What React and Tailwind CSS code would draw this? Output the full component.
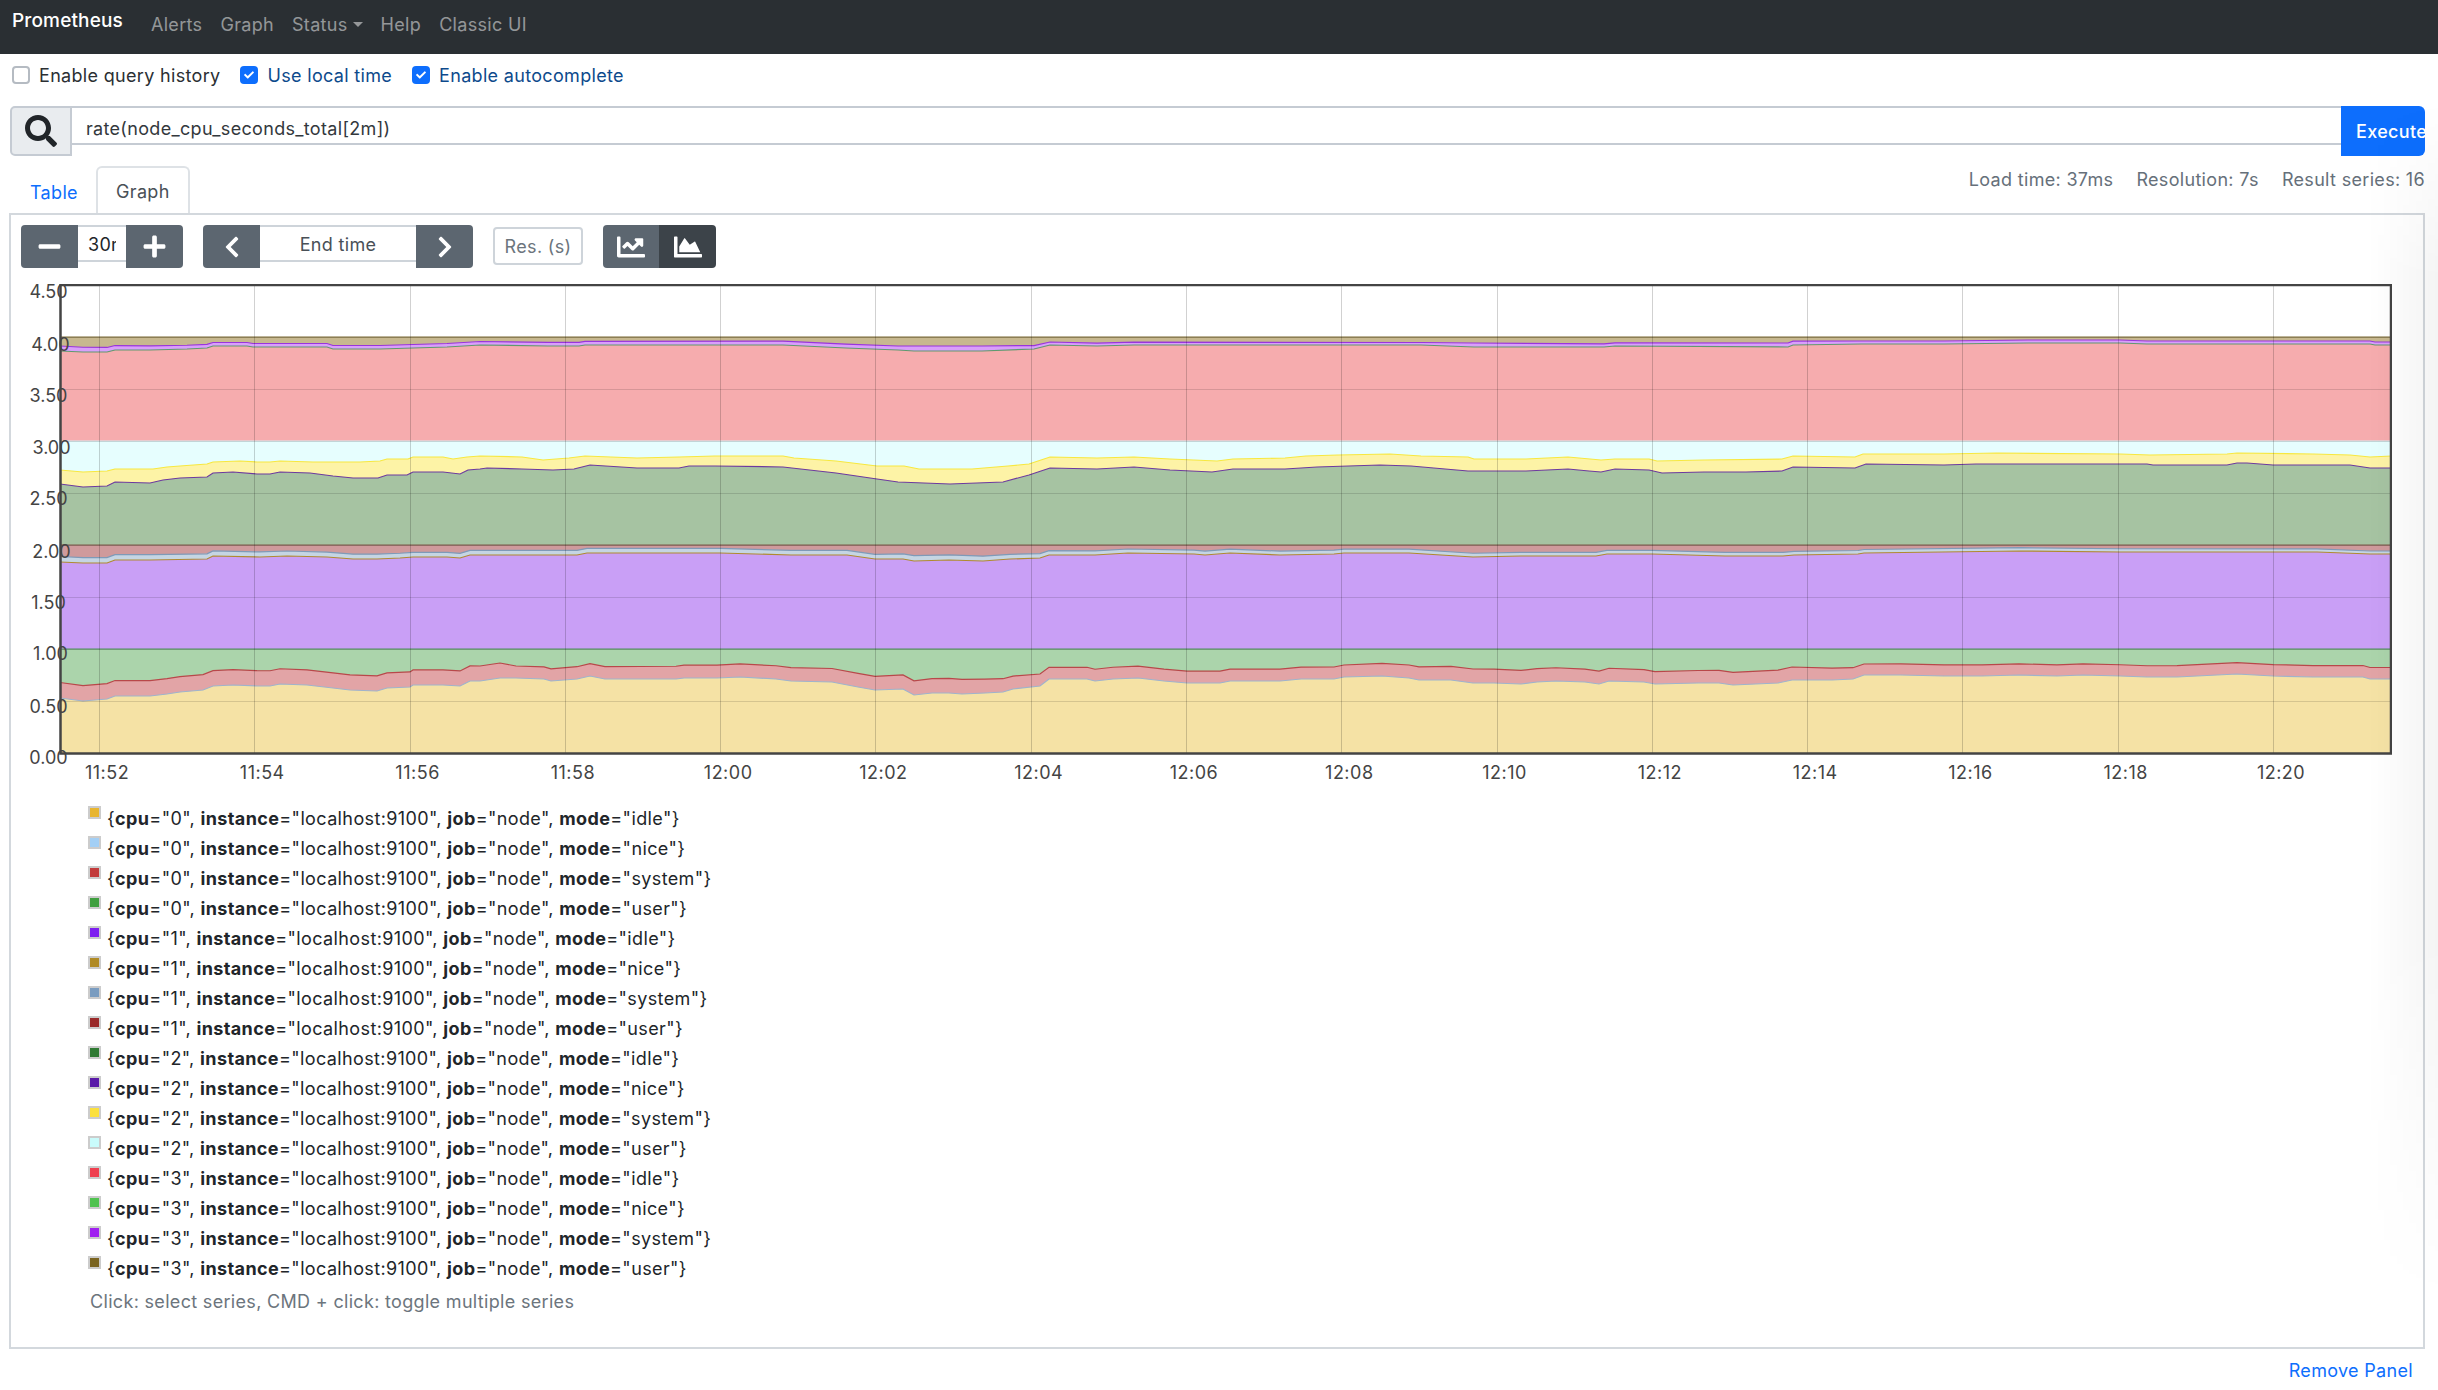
import React from 'react';
import { FaSearch, FaMinus, FaPlus, FaChevronLeft, FaChevronRight, FaChartLine, FaChartArea, FaCheck } from 'react-icons/fa';

const lerp = (table, x) => {
  for (let i = 1; i < table.length; i++) {
    if (x <= table[i][0]) {
      const [x0, y0] = table[i - 1];
      const [x1, y1] = table[i];
      return y0 + ((y1 - y0) * (x - x0)) / (x1 - x0);
    }
  }
  return table[table.length - 1][1];
};

const lift = (line, gaps) => line.map(([x, y]) => [x, y - lerp(gaps, x)]);
const flat = (y) => [[60, y], [2392, y]];

// series tops in page pixels
const idle0 = [[60,698],[83,701],[107,699],[115,696],[150,696],[167,694],[180,692],[203,690],[213,686],[233,685],[257,686],[270,686],[280,684],[307,685],[333,688],[350,690],[377,691],[387,688],[410,687],[413,685],[443,685],[460,686],[470,681],[480,681],[500,678],[516,678],[544,679],[551,681],[577,679],[590,676],[605,679],[676,679],[684,678],[717,678],[740,677],[776,679],[791,681],[832,682],[858,687],[875,690],[903,689],[914,695],[932,693],[949,693],[962,694],[985,693],[1003,692],[1013,689],[1040,686],[1049,679],[1087,679],[1095,681],[1113,679],[1138,678],[1164,681],[1187,683],[1220,683],[1230,681],[1280,681],[1301,679],[1334,679],[1344,677],[1382,676],[1409,678],[1419,680],[1451,680],[1473,683],[1494,683],[1521,684],[1537,682],[1556,681],[1585,682],[1599,684],[1609,681],[1644,682],[1655,684],[1698,683],[1719,683],[1733,685],[1778,683],[1792,680],[1832,680],[1853,679],[1864,675],[1901,675],[1944,676],[1982,676],[2019,675],[2057,676],[2083,675],[2120,676],[2147,677],[2177,677],[2237,674],[2273,676],[2313,677],[2363,677],[2370,679],[2392,679]];
const system0 = lift(idle0, [[60,15.5],[500,15],[516,12],[875,13.7],[962,14.7],[1049,11.7],[1344,12],[1473,14],[1655,12.3],[1792,13],[1864,11],[2392,11.5]]);
const idle1 = [[60,562],[83,563],[107,563],[115,560],[150,560],[207,559],[213,556],[260,557],[287,556],[327,557],[353,559],[377,559],[400,558],[413,557],[447,557],[460,558],[470,555],[577,555],[587,553],[720,553],[791,555],[847,555],[875,559],[903,559],[914,561],[949,560],[983,561],[1010,559],[1040,558],[1049,555],[1095,555],[1128,553],[1194,554],[1205,555],[1230,553],[1280,555],[1334,554],[1344,553],[1409,553],[1473,557],[1521,556],[1596,556],[1607,554],[1652,554],[1725,556],[1783,556],[1794,555],[1858,554],[1864,553],[2020,551],[2120,552],[2317,552],[2370,554],[2392,554]];
const system1 = lift(idle1, [[60,5.5],[500,4.5],[875,4.7],[914,5.3],[1100,4],[1864,3.5],[2392,3]]);
const idle2 = [[60,484],[83,487],[107,486],[115,482],[150,483],[163,480],[180,478],[207,477],[213,473],[233,472],[257,474],[270,474],[280,472],[310,473],[333,476],[353,478],[378,478],[387,475],[407,475],[413,472],[443,472],[460,474],[468,470],[480,469],[487,468],[522,469],[553,470],[574,469],[590,465],[637,468],[679,468],[689,466],[715,466],[783,467],[836,473],[877,479],[898,482],[950,484],[1003,482],[1029,475],[1050,468],[1097,469],[1134,467],[1170,470],[1212,472],[1233,469],[1285,469],[1317,467],[1380,465],[1411,466],[1468,471],[1526,471],[1568,469],[1589,471],[1601,472],[1615,469],[1649,470],[1662,473],[1704,472],[1746,472],[1782,471],[1793,467],[1855,468],[1866,464],[1944,465],[1976,464],[2147,464],[2153,465],[2227,465],[2237,463],[2247,463],[2273,465],[2350,465],[2370,468],[2392,468]];
const system2 = [[60,470],[83,472],[107,471],[115,469],[153,469],[167,467],[180,466],[207,464],[213,462],[240,461],[257,462],[270,462],[280,461],[313,462],[360,462],[380,461],[387,459],[408,459],[413,457],[443,457],[453,459],[467,457],[480,456],[522,457],[543,460],[569,458],[585,456],[637,458],[679,457],[715,456],[783,456],[794,458],[836,461],[877,466],[904,466],[919,469],[972,469],[1008,466],[1029,464],[1050,457],[1097,458],[1134,457],[1170,459],[1217,461],[1233,459],[1285,458],[1306,456],[1338,455],[1390,454],[1421,456],[1468,457],[1474,459],[1526,459],[1568,457],[1601,460],[1615,459],[1649,459],[1657,461],[1704,460],[1782,459],[1793,456],[1855,457],[1863,454],[1944,454],[1997,453],[2120,454],[2150,455],[2227,454],[2237,453],[2313,454],[2350,455],[2370,457],[2392,456]];
const idle3 = [[60,351],[83,352],[107,352],[115,350],[150,350],[187,349],[207,348],[213,346],[247,346],[253,347],[327,347],[333,349],[380,349],[413,348],[447,347],[480,345],[548,346],[579,346],[585,345],[783,345],[846,348],[898,350],[914,351],[982,351],[1034,349],[1050,345],[1097,346],[1134,345],[1421,345],[1474,347],[1604,347],[1615,346],[1788,347],[1793,345],[1861,344],[1944,344],[2028,343],[2120,343],[2147,344],[2370,344],[2375,345],[2392,345]];
const system3 = lift(idle3, [[60,5],[213,3.5],[480,3.5],[898,4],[914,5],[982,5],[1050,3],[1421,2.5],[1474,4],[1578,3],[1788,4],[1861,3],[2392,3]]);

// painted top of the stack first, each one runs down to the x axis
const bands = [
  { line: flat(337), fill: '#c7b88f', stroke: '#7d6a35' },
  { line: system3, fill: '#d99ffa', stroke: '#9a35dc' },
  { line: idle3, fill: '#f6acae', stroke: '#5f9a6f' },
  { line: flat(441), fill: '#e6fefe', stroke: '#d8ecef' },
  { line: system2, fill: '#fdf3a6', stroke: '#f7e840' },
  { line: idle2, fill: '#a6c3a2', stroke: '#6d3a9f' },
  { line: flat(545), fill: '#cf9a9c', stroke: '#7d5a48' },
  { line: system1, fill: '#c5d5e3', stroke: '#7f9ab8' },
  { line: idle1, fill: '#c99ff6', stroke: '#b08a30' },
  { line: flat(649), fill: '#abd4ab', stroke: '#4f8f5f' },
  { line: system0, fill: '#e2a4a6', stroke: '#b8484a' },
  { line: idle0, fill: '#f5e2a5', stroke: '#9fb3cc' },
];

const pts = (line) => line.map(([x, y]) => `${x},${y}`).join(' ');

const yTicks = [
  ['4.50', 48.5, 292], ['4.00', 50.5, 345], ['3.50', 48.5, 396], ['3.00', 51.5, 448], ['2.50', 48.5, 499],
  ['2.00', 51.5, 552], ['1.50', 48.5, 603], ['1.00', 50.5, 654], ['0.50', 48.5, 707], ['0.00', 48.5, 758],
];
const xTicks = ['11:52', '11:54', '11:56', '11:58', '12:00', '12:02', '12:04', '12:06', '12:08', '12:10', '12:12', '12:14', '12:16', '12:18', '12:20'];
const tickX = (i) => 99 + 155.29 * i;
const gridX = (i) => Math.round(tickX(i)) + 0.5;

const series = [
  ['0', 'idle', 'bg-[#e8b52f]'], ['0', 'nice', 'bg-[#a3cff5]'], ['0', 'system', 'bg-[#c23b3b]'], ['0', 'user', 'bg-[#3f9f3f]'],
  ['1', 'idle', 'bg-[#7e1ff0]'], ['1', 'nice', 'bg-[#b08a25]'], ['1', 'system', 'bg-[#7a9cc0]'], ['1', 'user', 'bg-[#9a2a2a]'],
  ['2', 'idle', 'bg-[#2f7a33]'], ['2', 'nice', 'bg-[#5a1aa8]'], ['2', 'system', 'bg-[#fbe03c]'], ['2', 'user', 'bg-[#c9fbfb]'],
  ['3', 'idle', 'bg-[#ef3f4f]'], ['3', 'nice', 'bg-[#4fc24f]'], ['3', 'system', 'bg-[#a020f0]'], ['3', 'user', 'bg-[#7a6420]'],
];

function Check({ on, label }) {
  return (
    <label className={`flex items-center gap-[9px] ${on ? 'text-[#0d4a8c]' : 'text-[#2b2f33]'}`}>
      {on ? (
        <span className="w-[18px] h-[18px] rounded-[4px] bg-[#0d6efd] flex items-center justify-center text-white">
          <FaCheck className="w-[10px] h-[10px]" />
        </span>
      ) : (
        <span className="w-[18px] h-[18px] rounded-[4px] border-2 border-[#b5bbc2] bg-white" />
      )}
      {label}
    </label>
  );
}

function Chart() {
  return (
    <div className="relative mt-[16px] h-[520px]">
      <svg viewBox="59 284 2333 471" className="ml-[48px] block w-[2333px] h-[471px]">
        {bands.map((b, i) => (
          <polygon key={i} points={`${pts(b.line)} 2392,754 60,754`} fill={b.fill} />
        ))}
        {bands.map((b, i) => (
          <polyline key={i} points={pts(b.line)} fill="none" stroke={b.stroke} strokeWidth="1.2" />
        ))}
        {[285, 337, 389, 441, 493, 545, 597, 649, 701].map((y) => (
          <line key={y} x1="60" x2="2392" y1={y + 0.5} y2={y + 0.5} stroke="rgba(0,0,0,0.13)" />
        ))}
        {xTicks.map((t, i) => (
          <line key={t} x1={gridX(i)} x2={gridX(i)} y1="285" y2="754" stroke="rgba(0,0,0,0.18)" />
        ))}
        <rect x="60.5" y="285" width="2330.5" height="468.5" fill="none" stroke="#444" strokeWidth="2.5" />
      </svg>
      {yTicks.map(([t, x, y]) => (
        <span
          key={t}
          className="absolute -translate-x-1/2 text-[18px] leading-[20px] tracking-normal text-[#444]"
          style={{ left: x - 11, top: y - 294 }}
        >
          {t}
        </span>
      ))}
      {xTicks.map((t, i) => (
        <span
          key={t}
          className="absolute -translate-x-1/2 text-[18px] leading-[20px] tracking-[0.5px] text-[#444]"
          style={{ left: tickX(i) + 8 - 11, top: 479 }}
        >
          {t}
        </span>
      ))}
    </div>
  );
}

export default function App() {
  return (
    <div className="relative h-[1390px] overflow-hidden bg-white text-[18px] tracking-[0.32px] font-['Inter',sans-serif] text-[#212529]">
      <nav className="h-[54px] bg-[#2a2f33] flex items-start">
        <span className="ml-[12px] mt-[7px] text-[19px] tracking-[0.15px] font-medium text-white">Prometheus</span>
        <div className="ml-[28px] mt-[11px] flex gap-[18px] text-[rgba(255,255,255,0.5)]">
          <span>Alerts</span>
          <span>Graph</span>
          <span className="flex items-center gap-[5px]">
            Status
            <span className="border-x-[5px] border-x-transparent border-t-[5px] border-t-[rgba(255,255,255,0.5)]" />
          </span>
          <span>Help</span>
          <span>Classic UI</span>
        </div>
      </nav>

      <div className="h-[44px] pl-[12px] pb-[2px] flex items-center gap-[20px]">
        <Check label="Enable query history" />
        <Check on label="Use local time" />
        <Check on label="Enable autocomplete" />
      </div>

      <div className="mt-[8px] ml-[10px] mr-[13px] h-[50px] flex items-start">
        <div className="w-[62px] h-[50px] bg-[#e9ecef] border-2 border-[#c5cbd3] rounded-l-[5px] flex items-center justify-center">
          <FaSearch className="w-[32px] h-[32px] text-[#212529]" />
        </div>
        <div className="flex-1 h-[39px] border-y-2 border-[#c5cbd3] pl-[14px] pt-[5px] flex items-center text-[#33383d]">
          rate(node_cpu_seconds_total[2m])
        </div>
        <div className="w-[84px] h-[50px] pl-[15px] pr-[2px] bg-[#0d6efd] rounded-r-[6px] text-white font-medium overflow-hidden flex items-center whitespace-nowrap">
          Execute
        </div>
      </div>

      <div className="mt-[10px] ml-[10px] mr-[13px] h-[47px] flex items-start justify-between">
        <div className="flex items-start">
          <span className="ml-[20px] mt-[13px] text-[#0d6efd]">Table</span>
          <span className="ml-[18px] h-[47px] w-[94px] pt-[2px] border-2 border-b-0 border-[#dee2e6] rounded-t-[6px] flex items-center justify-center text-[#495057]">
            Graph
          </span>
        </div>
        <div className="flex gap-[23px] text-[#66707a]">
          <span>Load time: 37ms</span>
          <span>Resolution: 7s</span>
          <span>Result series: 16</span>
        </div>
      </div>

      <div className="ml-[9px] mr-[13px] h-[1136px] border-2 border-[#d3d8dd]">
        <div className="mt-[10px] pl-[10px] flex items-start">
          <div className="flex items-start">
            <div className="w-[57px] h-[43px] rounded-l-[4px] bg-[#5c6670] text-white flex items-center justify-center">
              <FaMinus className="w-[25px] h-[25px]" />
            </div>
            <div className="w-[48px] h-[37px] pl-[10px] pt-[2px] border-y-2 border-[#ced4da] flex items-center">
              <span className="w-[28px] overflow-hidden whitespace-nowrap">30m</span>
            </div>
            <div className="w-[57px] h-[43px] rounded-r-[4px] bg-[#5c6670] text-white flex items-center justify-center">
              <FaPlus className="w-[25px] h-[25px]" />
            </div>
          </div>
          <div className="ml-[20px] flex items-start">
            <div className="w-[57px] h-[43px] rounded-l-[4px] bg-[#5c6670] text-white flex items-center justify-center">
              <FaChevronLeft className="w-[24px] h-[24px]" />
            </div>
            <div className="w-[156px] h-[37px] pt-[2px] border-y-2 border-[#ced4da] flex items-center justify-center text-[#495057]">
              End time
            </div>
            <div className="w-[57px] h-[43px] rounded-r-[4px] bg-[#5c6670] text-white flex items-center justify-center">
              <FaChevronRight className="w-[24px] h-[24px]" />
            </div>
          </div>
          <div className="ml-[20px] mt-[2px] w-[90px] h-[38px] border-2 border-[#ced4da] rounded-[4px] flex items-center justify-center text-[#6c757d]">
            Res. (s)
          </div>
          <div className="ml-[20px] flex">
            <div className="w-[56px] h-[43px] rounded-l-[4px] bg-[#5c6670] text-white flex items-center justify-center">
              <FaChartLine className="w-[28px] h-[28px]" />
            </div>
            <div className="w-[57px] h-[43px] rounded-r-[4px] bg-[#3c4349] text-white flex items-center justify-center">
              <FaChartArea className="w-[28px] h-[28px]" />
            </div>
          </div>
        </div>

        <Chart />

        <div className="pl-[77px]">
          {series.map(([cpu, mode, color]) => (
            <div key={cpu + mode} className="h-[30px] pb-[2px] flex items-center gap-[6px] tracking-[0.38px] text-[#212529]">
              <span className="mb-[12px] w-[13px] h-[13px] border-2 border-[#ccc] bg-white flex">
                <span className={`flex-1 ${color}`} />
              </span>
              <span>
                {'{'}<b>cpu</b>="{cpu}", <b>instance</b>="localhost:9100", <b>job</b>="node", <b>mode</b>="{mode}"{'}'}
              </span>
            </div>
          ))}
          <div className="mt-[4px] ml-[2px] text-[#6c757d]">Click: select series, CMD + click: toggle multiple series</div>
        </div>
      </div>

      <div className="mt-[8px] mr-[25px] flex justify-end text-[#0d6efd]">Remove Panel</div>

      <div className="absolute right-0 top-[100px] w-[70px] h-[1200px] pointer-events-none bg-gradient-to-r from-transparent to-[rgba(0,0,0,0.045)] [mask-image:linear-gradient(to_bottom,transparent,black_15%,black_70%,transparent)]" />
    </div>
  );
}
